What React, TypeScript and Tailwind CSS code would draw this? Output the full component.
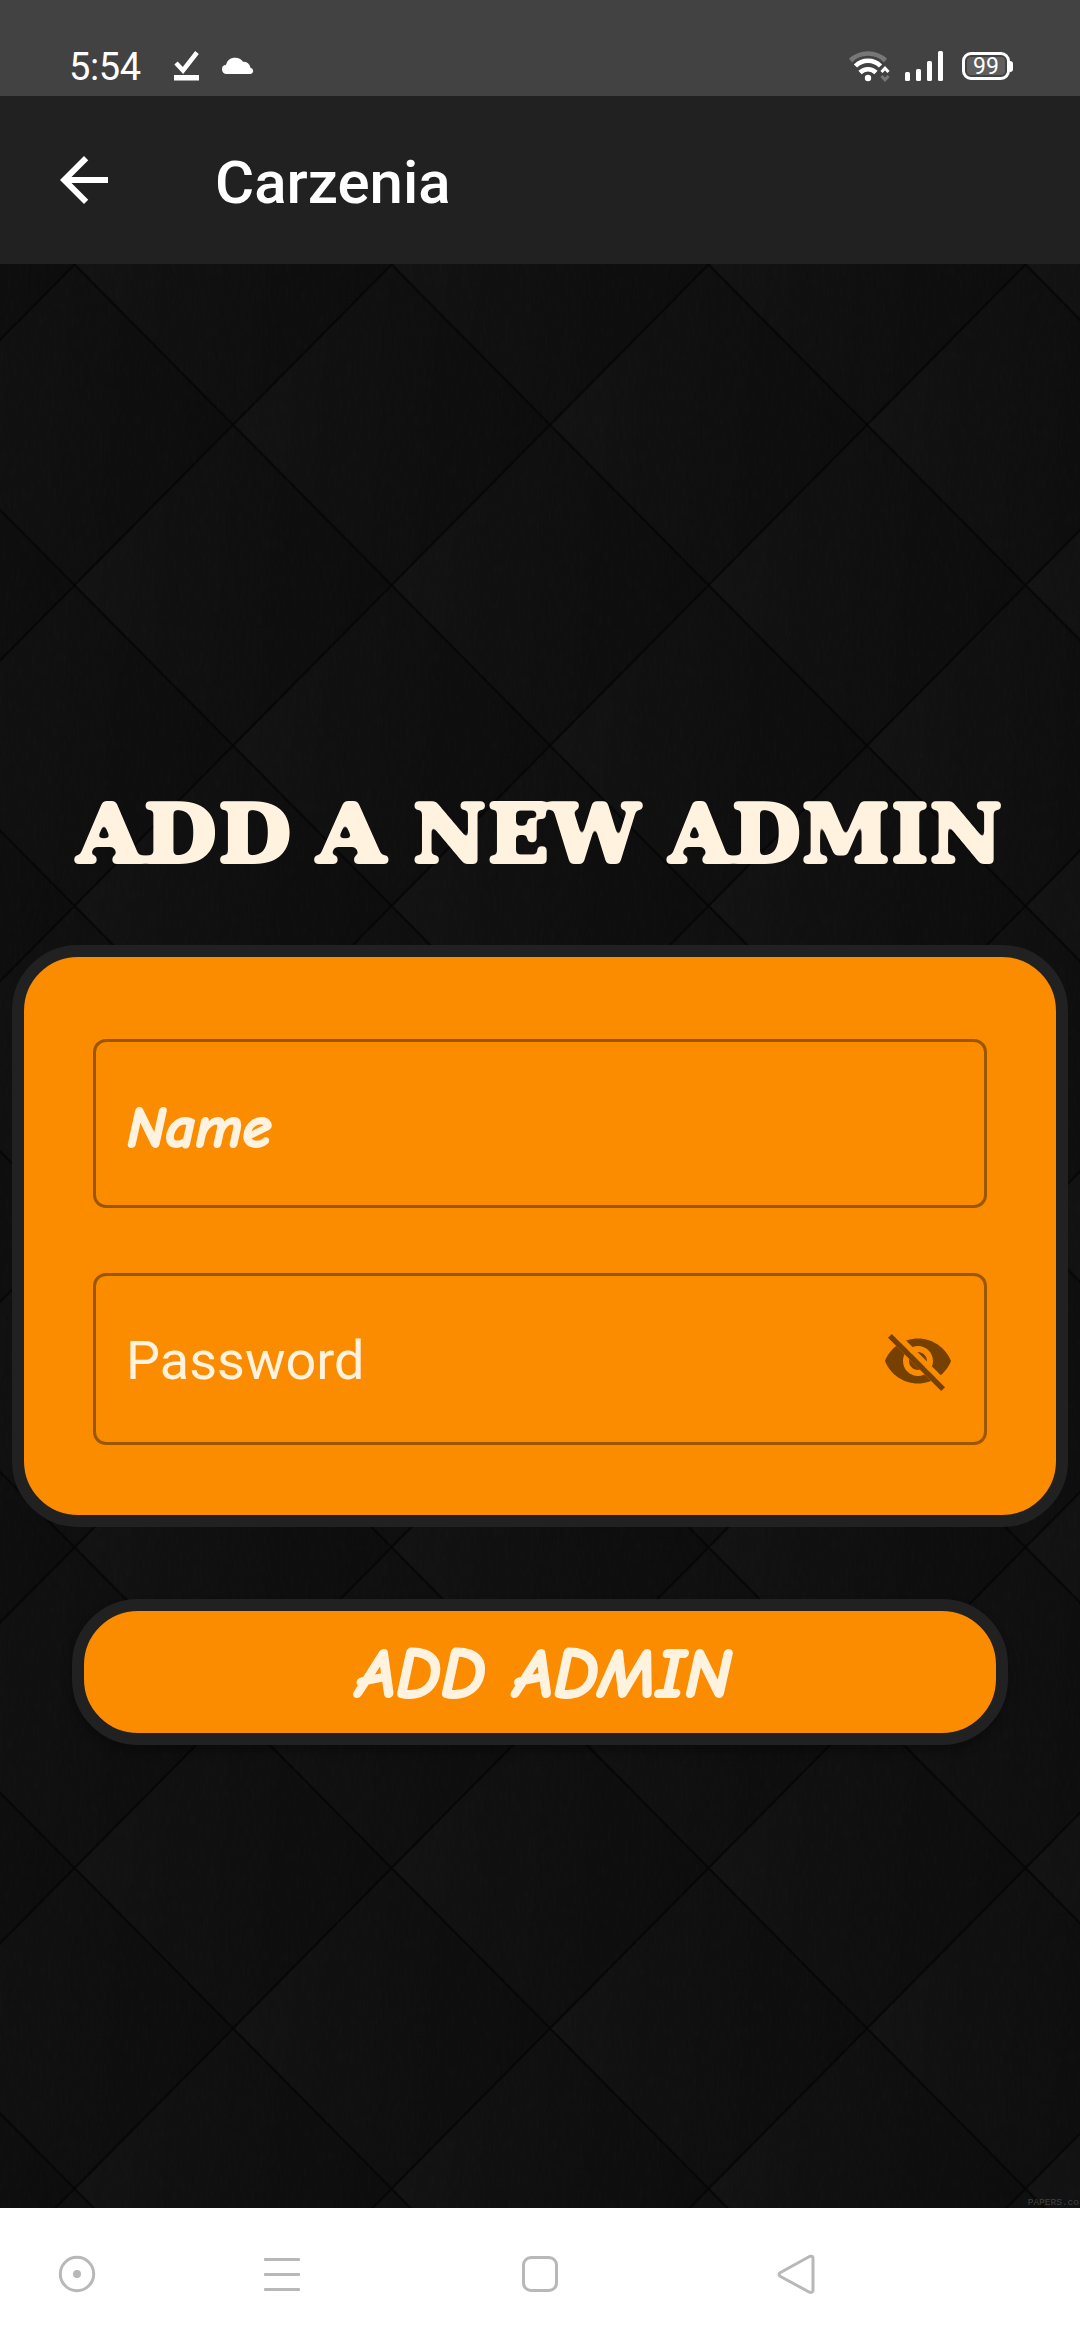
import type { ReactNode } from "react";

const TILE_W = 317;
const TILE_H = 320.7;

function QuiltBackdrop() {
  const w = TILE_W;
  const h = TILE_H;
  const diamond = (cx: number, cy: number) =>
    `M${cx - w / 2} ${cy}L${cx} ${cy - h / 2}L${cx + w / 2} ${cy}L${cx} ${cy + h / 2}Z`;
  return (
    <svg className="absolute inset-0 h-full w-full" aria-hidden="true">
      <defs>
        <linearGradient id="shade" x1="0" y1="0" x2="1" y2="0.08">
          <stop offset="0" stopColor="#141414" />
          <stop offset="0.25" stopColor="#111111" />
          <stop offset="0.7" stopColor="#0e0e0e" />
          <stop offset="1" stopColor="#0d0d0d" />
        </linearGradient>
        <pattern id="quilt" x="74.500" y="0.5" width={w} height={h} patternUnits="userSpaceOnUse">
          <path d={diamond(w / 2, 0)} fill="url(#shade)" />
          <path d={diamond(w / 2, h)} fill="url(#shade)" />
          <path d={diamond(0, h / 2)} fill="url(#shade)" />
          <path d={diamond(w, h / 2)} fill="url(#shade)" />
          <path d={`M0 0L${w} ${h}M${w} 0L0 ${h}`} stroke="#050505" strokeWidth="2" strokeLinecap="square" />
        </pattern>
        <filter id="weave" x="0" y="0" width="100%" height="100%">
          <feTurbulence type="fractalNoise" baseFrequency="0.35 0.08" numOctaves="2" seed="4" />
          <feColorMatrix values="0 0 0 0 1  0 0 0 0 1  0 0 0 0 1  0.12 0 0 0 -0.045" />
        </filter>
        <filter id="soften" x="-2%" y="-5%" width="104%" height="110%">
          <feGaussianBlur stdDeviation="2.3" />
          <feComponentTransfer>
            <feFuncA type="linear" slope="6" intercept="-2.500" />
          </feComponentTransfer>
        </filter>
      </defs>
      <rect width="100%" height="100%" fill="#0e0e0e" />
      <rect width="100%" height="100%" fill="url(#quilt)" />
      <rect width="100%" height="100%" filter="url(#weave)" opacity="0.2" />
    </svg>
  );
}

function StatusBar() {
  return (
    <div className="flex h-24 items-start bg-[#424242] pl-[69px] pr-[67px] pt-[46px] text-white">
      <span className="mt-px w-[105px] text-[38px] leading-10 tracking-[-0.4px]">5:54</span>
      <svg className="mt-[4px] h-[32px] w-[26px]" viewBox="0 0 26 32">
        <path d="M2 14l7 7.5L23 3.5" transform="translate(0 -1)" fill="none" stroke="#fff" strokeWidth="4.6" />
        <rect x="0" y="25" width="25" height="5.5" fill="#fff" />
      </svg>
      <svg className="ml-[22px] mt-[9px] h-5 w-8" viewBox="0 0 32 20" fill="#fff">
        <path d="M4.5 19A4.5 4.5 0 0 1 0 14.500A4.500 4.500 0 0 1 4 9.800A9.500 9.500 0 0 1 21 6.800A6.800 6.800 0 0 1 28.500 12.800A3.200 3.200 0 0 1 29 19Z" />
      </svg>
      <div className="grow" />
      <svg className="mt-[4px] h-8 w-[42px]" viewBox="847 50 42 32" fill="none">
        <path d="M849.500 60.500A25.500 25.500 0 0 1 884.500 60.500" stroke="#777" strokeWidth="4.500" />
        <path d="M854.500 66A17.500 17.500 0 0 1 879.500 66" stroke="#fff" strokeWidth="4.600" />
        <path d="M859 72.500A11.500 11.500 0 0 1 875 72.500" stroke="#fff" strokeWidth="4.600" />
        <circle cx="867" cy="78" r="3.200" fill="#fff" />
        <path d="M880.500 72l3.500-3.800 3.500 3.800" stroke="#fff" strokeWidth="3" />
        <path d="M880.500 76l3.500 3.800 3.500-3.800" stroke="#777" strokeWidth="3" />
      </svg>
      <svg className="ml-[14px] mt-[4px] h-8 w-10" viewBox="903 50 40 32" fill="#fff">
        <rect x="904" y="72" width="5" height="9" rx="1.500" />
        <rect x="915" y="69" width="5" height="12" rx="1.500" />
        <rect x="926" y="61" width="5" height="20" rx="1.500" />
        <rect x="937" y="51" width="5" height="30" rx="1.500" />
      </svg>
      <div className="ml-[18px] mt-[6px] flex items-center">
        <div className="flex h-7 w-12 items-center justify-center rounded-[9px] border-3 border-white p-[2px]">
          <div className="flex h-full w-full items-center justify-center rounded-[4px] bg-[#5f5f5f] text-[23px] leading-none">
            99
          </div>
        </div>
        <div className="h-[11px] w-[3px] rounded-r-full bg-white" />
      </div>
    </div>
  );
}

function AppBar() {
  return (
    <header className="flex h-[168px] items-center bg-[#212121] pl-12 text-white">
      <svg className="h-[72px] w-[72px]" viewBox="0 0 24 24" fill="currentColor">
        <path d="M20 11H7.830l5.590-5.590L12 4l-8 8 8 8 1.410-1.410L7.830 13H20v-2z" />
      </svg>
      <h1 className="ml-[95px] pt-[5px] text-[60px] font-medium leading-none">Carzenia</h1>
    </header>
  );
}

function EyeOff() {
  return (
    <svg className="mt-1 h-[72px] w-[72px]" viewBox="0 0 24 24" fill="none">
      <mask id="gap" maskUnits="userSpaceOnUse" x="0" y="0" width="24" height="24">
        <rect width="24" height="24" fill="#fff" />
        <path d="M0 -1.550L26 24.450" stroke="#000" strokeWidth="1.800" />
        <path d="M2.640 3.640L20.360 21.360" stroke="#000" strokeWidth="1.800" />
      </mask>
      <path
        mask="url(#gap)"
        fill="#764100"
        d="M12 4.500C7 4.500 2.730 7.610 1 12c1.730 4.390 6 7.500 11 7.500s9.270-3.110 11-7.500c-1.730-4.390-6-7.500-11-7.500zM12 17c-2.760 0-5-2.240-5-5s2.240-5 5-5 5 2.240 5 5-2.240 5-5 5zm0-8c-1.660 0-3 1.340-3 3s1.340 3 3 3 3-1.340 3-3-1.340-3-3-3z"
      />
      <path d="M2.640 3.640L20.360 21.360" stroke="#764100" strokeWidth="1.800" />
    </svg>
  );
}

function Field({ className, children }: { className: string; children: ReactNode }) {
  return (
    <div className={`flex w-full items-center justify-between rounded-[13px] border-3 border-[#9b5700] pl-[31px] pr-[30px] ${className}`}>
      {children}
    </div>
  );
}

function HeadingWord({ className, children }: { className: string; children: string }) {
  return <span className={`origin-left whitespace-nowrap ${className}`}>{children}</span>;
}

function NavBar() {
  return (
    <nav className="flex h-[132px] items-center bg-white pl-[58px]">
      <svg className="h-11 w-[38px]" viewBox="0 0 38 44" fill="none">
        <circle cx="19" cy="22" r="16.700" stroke="#b8b8b8" strokeWidth="3" />
        <circle cx="19" cy="22" r="4" fill="#b8b8b8" />
      </svg>
      <svg className="ml-[168px] h-11 w-9" viewBox="0 0 36 44" fill="#b8b8b8">
        <rect y="6" width="36" height="3" rx="1" />
        <rect y="21" width="36" height="3" rx="1" />
        <rect y="36" width="36" height="3" rx="1" />
      </svg>
      <div className="ml-[222px] h-9 w-9 rounded-[9px] border-3 border-[#b8b8b8]" />
      <svg className="ml-[218px] h-11 w-10" viewBox="0 0 40 44" fill="none">
        <path
          d="M33.500 4.500L4.500 20.500Q1.500 22.500 4.500 24.500L33.500 40.200Q37 41 37 38V6.500Q37 3.200 33.500 4.500Z"
          stroke="#b8b8b8"
          strokeWidth="3"
          strokeLinejoin="round"
        />
      </svg>
    </nav>
  );
}

export default function App() {
  return (
    <div className="flex h-[2340px] w-[1080px] flex-col overflow-hidden bg-[#0e0e0e] font-['Roboto',sans-serif]">
      <StatusBar />
      <AppBar />
      <main className="relative grow overflow-hidden">
        <QuiltBackdrop />
        <div className="relative flex h-full flex-col items-center px-3 pt-[521px] text-[#fff3e0]">
          <h2 className="flex w-full pl-[65px] font-['DejaVu_Serif',serif] text-[80px] font-bold leading-[98px] tracking-[1.5px] [-webkit-text-stroke:4px_#fff3e0] [filter:url(#soften)]">
            <HeadingWord className="w-[240px] scale-x-[1.05]">ADD</HeadingWord>
            <HeadingWord className="w-[96px] scale-x-[1.1]">A</HeadingWord>
            <HeadingWord className="w-[256px]">NEW</HeadingWord>
            <HeadingWord className="scale-x-[0.99]">ADMIN</HeadingWord>
          </h2>
          <section className="mt-[62px] flex h-[582px] w-full flex-col rounded-[66px] border-12 border-[#212121] bg-[#fb8c00] px-[69px] pt-[82px]">
            <Field className="h-[169px]">
              <span className="pt-[10px] font-['Comic_Neue',cursive] text-[59px] font-bold italic leading-none [-webkit-text-stroke:2px_#fff3e0]">
                Name
              </span>
            </Field>
            <Field className="mt-[65px] h-[172px]">
              <span className="-ml-px pt-1 text-[54px] leading-none">Password</span>
              <EyeOff />
            </Field>
          </section>
          <button className="mt-[72px] flex h-[146px] w-[936px] items-center justify-center rounded-[66px] border-12 border-[#212121] bg-[#fb8c00] pl-[8px] pt-[6px] font-['Comic_Neue',cursive] text-[71.5px] font-bold italic leading-none [word-spacing:3px] shadow-[0_6px_10px_rgba(0,0,0,0.3)] [-webkit-text-stroke:2px_#fff3e0]">
            ADD ADMIN
          </button>
        </div>
        <span className="absolute bottom-0 right-px font-['Liberation_Mono',monospace] text-[9.5px] leading-[10px] text-[#424242]">
          PAPERS.co
        </span>
      </main>
      <NavBar />
    </div>
  );
}
